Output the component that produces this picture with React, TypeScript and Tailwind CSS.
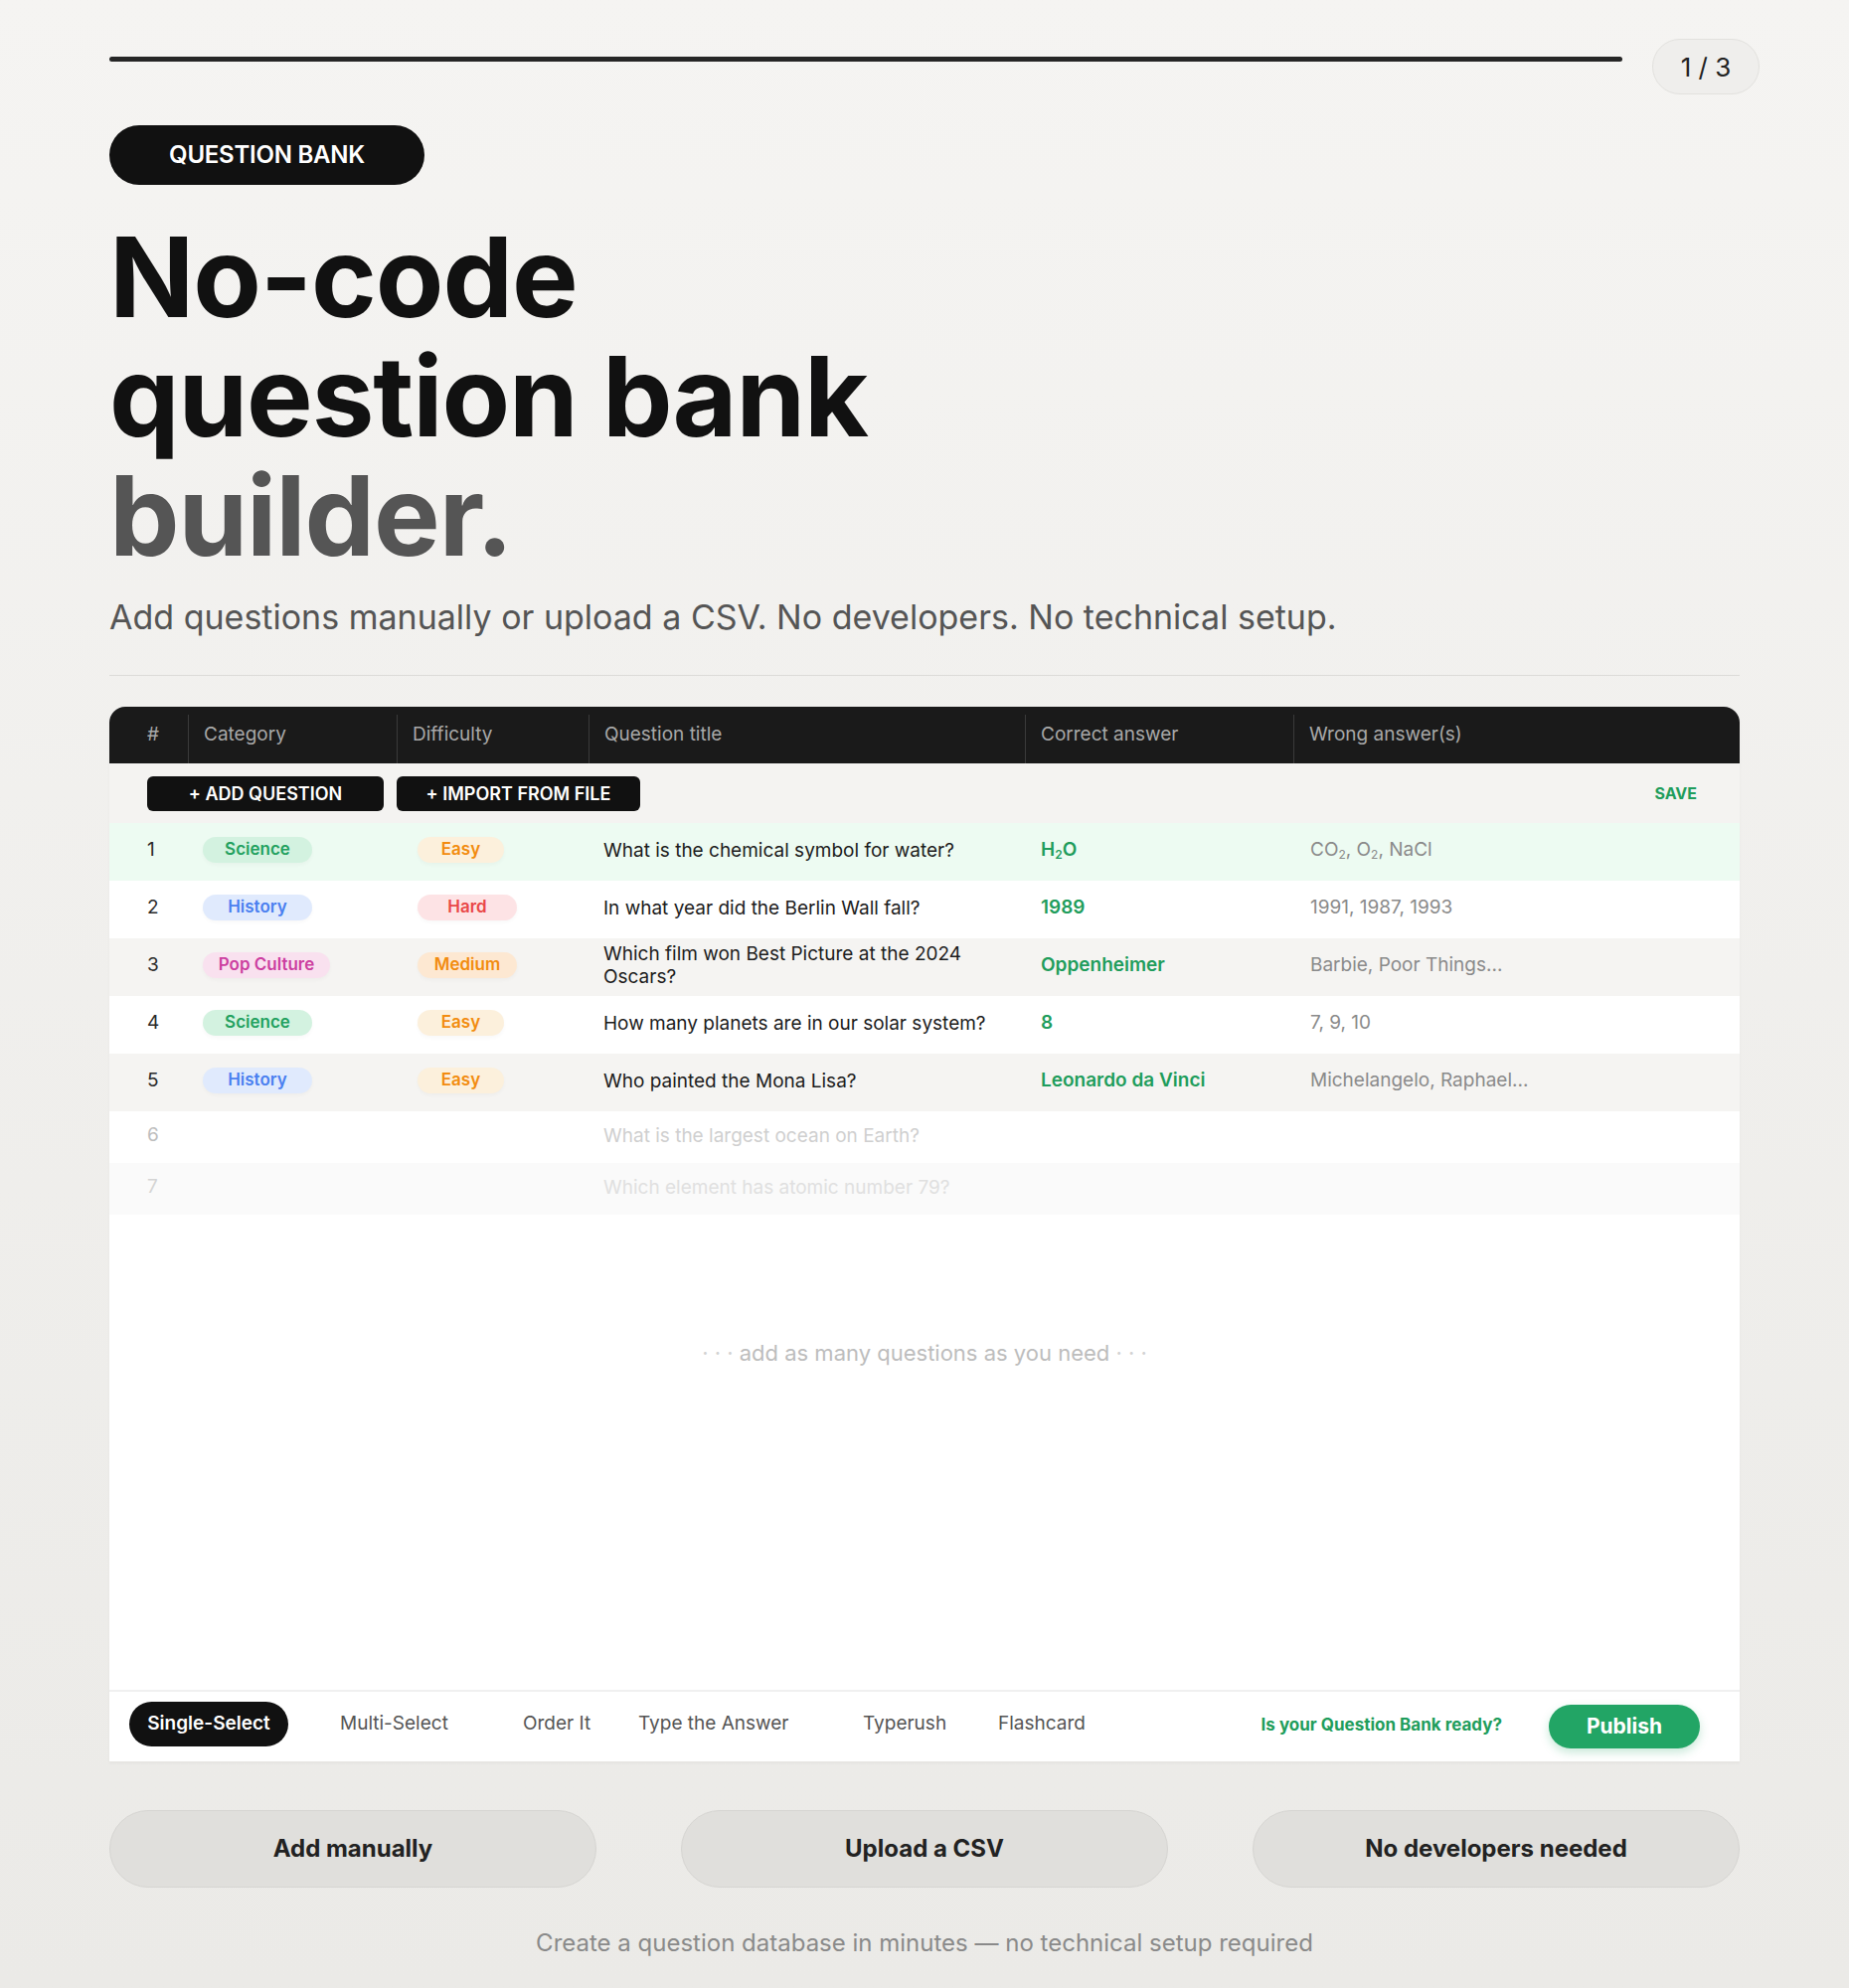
import { ReactNode } from "react";

type Tone = "green" | "blue" | "pink" | "orange" | "red" | "amber";

interface Tag {
  label: string;
  tone: Tone;
  w: string;
}

interface Row {
  n: number;
  category?: Tag;
  difficulty?: Tag;
  title: string;
  correct?: ReactNode;
  wrong?: ReactNode;
  bg: string;
  faded?: "soft" | "softer";
}

const toneClass: Record<Tone, string> = {
  green: "bg-[#d3f2e0] text-[#23a15f]",
  blue: "bg-[#e0eafd] text-[#4a80f0]",
  pink: "bg-[#f9e1ef] text-[#cc3fa0]",
  orange: "bg-[#fcf0dc] text-[#f28c0f]",
  red: "bg-[#fde3e5] text-[#e94848]",
  amber: "bg-[#fde8d2] text-[#f28c0f]",
};

const science: Tag = { label: "Science", tone: "green", w: "w-[110px]" };
const history: Tag = { label: "History", tone: "blue", w: "w-[110px]" };
const easy: Tag = { label: "Easy", tone: "orange", w: "w-[87px]" };

const sub = "text-[12px] align-[-3px]";

const rows: Row[] = [
  {
    n: 1,
    category: science,
    difficulty: easy,
    title: "What is the chemical symbol for water?",
    correct: (
      <>
        H<span className={sub}>2</span>O
      </>
    ),
    wrong: (
      <>
        CO<span className={sub}>2</span>, O<span className={sub}>2</span>, NaCl
      </>
    ),
    bg: "bg-[#edfbf2]",
  },
  {
    n: 2,
    category: history,
    difficulty: { label: "Hard", tone: "red", w: "w-[100px]" },
    title: "In what year did the Berlin Wall fall?",
    correct: "1989",
    wrong: "1991, 1987, 1993",
    bg: "bg-white",
  },
  {
    n: 3,
    category: { label: "Pop Culture", tone: "pink", w: "w-[128px]" },
    difficulty: { label: "Medium", tone: "amber", w: "w-[100px]" },
    title: "Which film won Best Picture at the 2024 Oscars?",
    correct: "Oppenheimer",
    wrong: "Barbie, Poor Things...",
    bg: "bg-[#f5f4f2]",
  },
  {
    n: 4,
    category: science,
    difficulty: easy,
    title: "How many planets are in our solar system?",
    correct: "8",
    wrong: "7, 9, 10",
    bg: "bg-white",
  },
  {
    n: 5,
    category: history,
    difficulty: easy,
    title: "Who painted the Mona Lisa?",
    correct: "Leonardo da Vinci",
    wrong: "Michelangelo, Raphael...",
    bg: "bg-[#f5f4f2]",
  },
  {
    n: 6,
    title: "What is the largest ocean on Earth?",
    bg: "bg-white",
    faded: "soft",
  },
  {
    n: 7,
    title: "Which element has atomic number 79?",
    bg: "bg-[#fafafa]",
    faded: "softer",
  },
];

const columns = ["#", "Category", "Difficulty", "Question title", "Correct answer", "Wrong answer(s)"];

const tabs = [
  { label: "Single-Select", w: "w-[195px]", active: true },
  { label: "Multi-Select", w: "w-[184px]" },
  { label: "Order It", w: "w-[116px]" },
  { label: "Type the Answer", w: "w-[226px]" },
  { label: "Typerush", w: "w-[136px]" },
  { label: "Flashcard", w: "w-[150px]" },
];

const grid = "grid grid-cols-[79px_210px_193px_439px_270px_1fr]";

function Pill({ tag }: { tag: Tag }) {
  return (
    <span
      className={`inline-flex h-[26px] items-center justify-center rounded-full text-[17px] font-semibold shadow-[0_2px_4px_rgba(0,0,0,0.03)] ${tag.w} ${toneClass[tag.tone]}`}
    >
      {tag.label}
    </span>
  );
}

function QuestionRow({ row }: { row: Row }) {
  const numColor =
    row.faded === "softer" ? "text-[#d4d4d4]" : row.faded ? "text-[#bdbdbd]" : "text-[#2a2a2a]";
  const titleColor =
    row.faded === "softer" ? "text-[#e0e0e0]" : row.faded ? "text-[#cfcfcf]" : "text-[#1c1c1c]";
  return (
    <div className={`${grid} ${row.bg} ${row.faded ? "h-[52px]" : "h-[58px]"} items-center pb-[4px]`}>
      <div className={`pl-[38px] text-[19px] ${numColor}`}>{row.n}</div>
      <div className="pl-[15px]">{row.category && <Pill tag={row.category} />}</div>
      <div className="pl-[21px]">{row.difficulty && <Pill tag={row.difficulty} />}</div>
      <div className={`pl-[15px] pr-4 text-[19px] leading-[23px] ${titleColor}`}>{row.title}</div>
      <div className="pl-4 text-[19px] font-semibold text-[#1f9d5c]">{row.correct}</div>
      <div className="pl-[17px] text-[19px] text-[#8a8a8a]">{row.wrong}</div>
    </div>
  );
}

export default function App() {
  return (
    <div className="min-h-[2000px] bg-gradient-to-b from-[#f5f4f2] to-[#ebeae7] px-[110px] font-['Inter',sans-serif] text-[#111]">
      {/* progress + step counter */}
      <div className="flex w-[1660px] items-start pt-[39px]">
        <div className="mt-[18px] h-[5px] flex-1 rounded-full bg-[#262626]" />
        <div className="ml-[30px] flex h-[56px] w-[108px] items-center justify-center rounded-full border border-[#e2e1de] bg-[#efeeec] text-[26px] text-[#222]">
          1 / 3
        </div>
      </div>

      <div className="mt-[31px] inline-flex h-[60px] w-[317px] items-center justify-center rounded-full bg-[#111] text-[24px] font-semibold tracking-[-0.01em] text-white">
        QUESTION BANK
      </div>

      <h1 className="mt-[32px] text-[112px] font-bold leading-[120px] tracking-[-0.01em]">
        No-code
        <br />
        question bank
        <br />
        <span className="text-[#555]">builder.</span>
      </h1>

      <p className="mt-[19px] text-[34px] leading-[48px] text-[#555]">
        Add questions manually or upload a CSV. No developers. No technical setup.
      </p>

      <div className="mt-[34px] h-px w-[1640px] bg-[#dcdbd8]" />

      {/* question table */}
      <div className="mt-[31px] w-[1640px] overflow-hidden rounded-t-[16px] border-b border-[#e7e6e3] bg-white shadow-[0_1px_3px_rgba(0,0,0,0.04)]">
        <div className={`${grid} h-[57px] bg-[#1a1a1a]`}>
          {columns.map((c, i) => (
            <div
              key={c}
              className={`mt-2 flex items-center pb-2 text-[19px] text-[#a8a8a8] ${
                i === 0 ? "pl-[38px]" : "border-l border-[#3a3a3a] pl-[15px]"
              }`}
            >
              {c}
            </div>
          ))}
        </div>

        <div className="flex h-[60px] items-center bg-[#f4f3f1] pl-[38px] pr-[43px]">
          <button className="h-[35px] w-[238px] rounded-[6px] bg-[#111] text-[18px] font-semibold text-white">
            + ADD QUESTION
          </button>
          <button className="ml-[13px] h-[35px] w-[245px] rounded-[6px] bg-[#111] text-[18px] font-semibold text-white">
            + IMPORT FROM FILE
          </button>
          <span className="ml-auto text-[16px] font-bold text-[#1f9d5c]">SAVE</span>
        </div>

        {rows.map((r) => (
          <QuestionRow key={r.n} row={r} />
        ))}

        <div className="h-[478px] bg-white pt-[123px] text-center text-[22px] text-[#bdbdbd]">
          <span className="text-[#d2d2d2]">· · ·</span> add as many questions as you need{" "}
          <span className="text-[#d2d2d2]">· · ·</span>
        </div>

        {/* question type tabs + publish */}
        <div className="flex h-[72px] items-center border-t-2 border-[#f0f0f0] bg-white pl-[20px] pr-[40px]">
          <div className="mb-[6px] flex items-center">
            {tabs.map((t) => (
              <div key={t.label} className={t.w}>
                {t.active ? (
                  <span className="inline-flex h-[45px] w-[160px] items-center justify-center rounded-full bg-[#111] text-[19px] font-semibold text-white">
                    {t.label}
                  </span>
                ) : (
                  <span className="pl-[17px] text-[19px] text-[#555]">{t.label}</span>
                )}
              </div>
            ))}
          </div>
          <span className="ml-auto mb-[2px] text-[17px] font-bold text-[#1f9d5c]">
            Is your Question Bank ready?
          </span>
          <button className="ml-[47px] h-[44px] w-[152px] rounded-full bg-[#22a565] text-[21px] font-bold text-white shadow-[0_4px_10px_rgba(34,165,101,0.25)]">
            Publish
          </button>
        </div>
      </div>

      <div className="mt-[48px] grid w-[1640px] grid-cols-3 gap-[85px]">
        {["Add manually", "Upload a CSV", "No developers needed"].map((l) => (
          <div
            key={l}
            className="flex h-[78px] items-center justify-center rounded-full border border-[#d6d5d2] bg-[#e0dfdc] text-[24px] font-bold text-[#222]"
          >
            {l}
          </div>
        ))}
      </div>

      <p className="mt-[38px] w-[1640px] text-center text-[24px] text-[#8a8a8a]">
        Create a question database in minutes — no technical setup required
      </p>
    </div>
  );
}
